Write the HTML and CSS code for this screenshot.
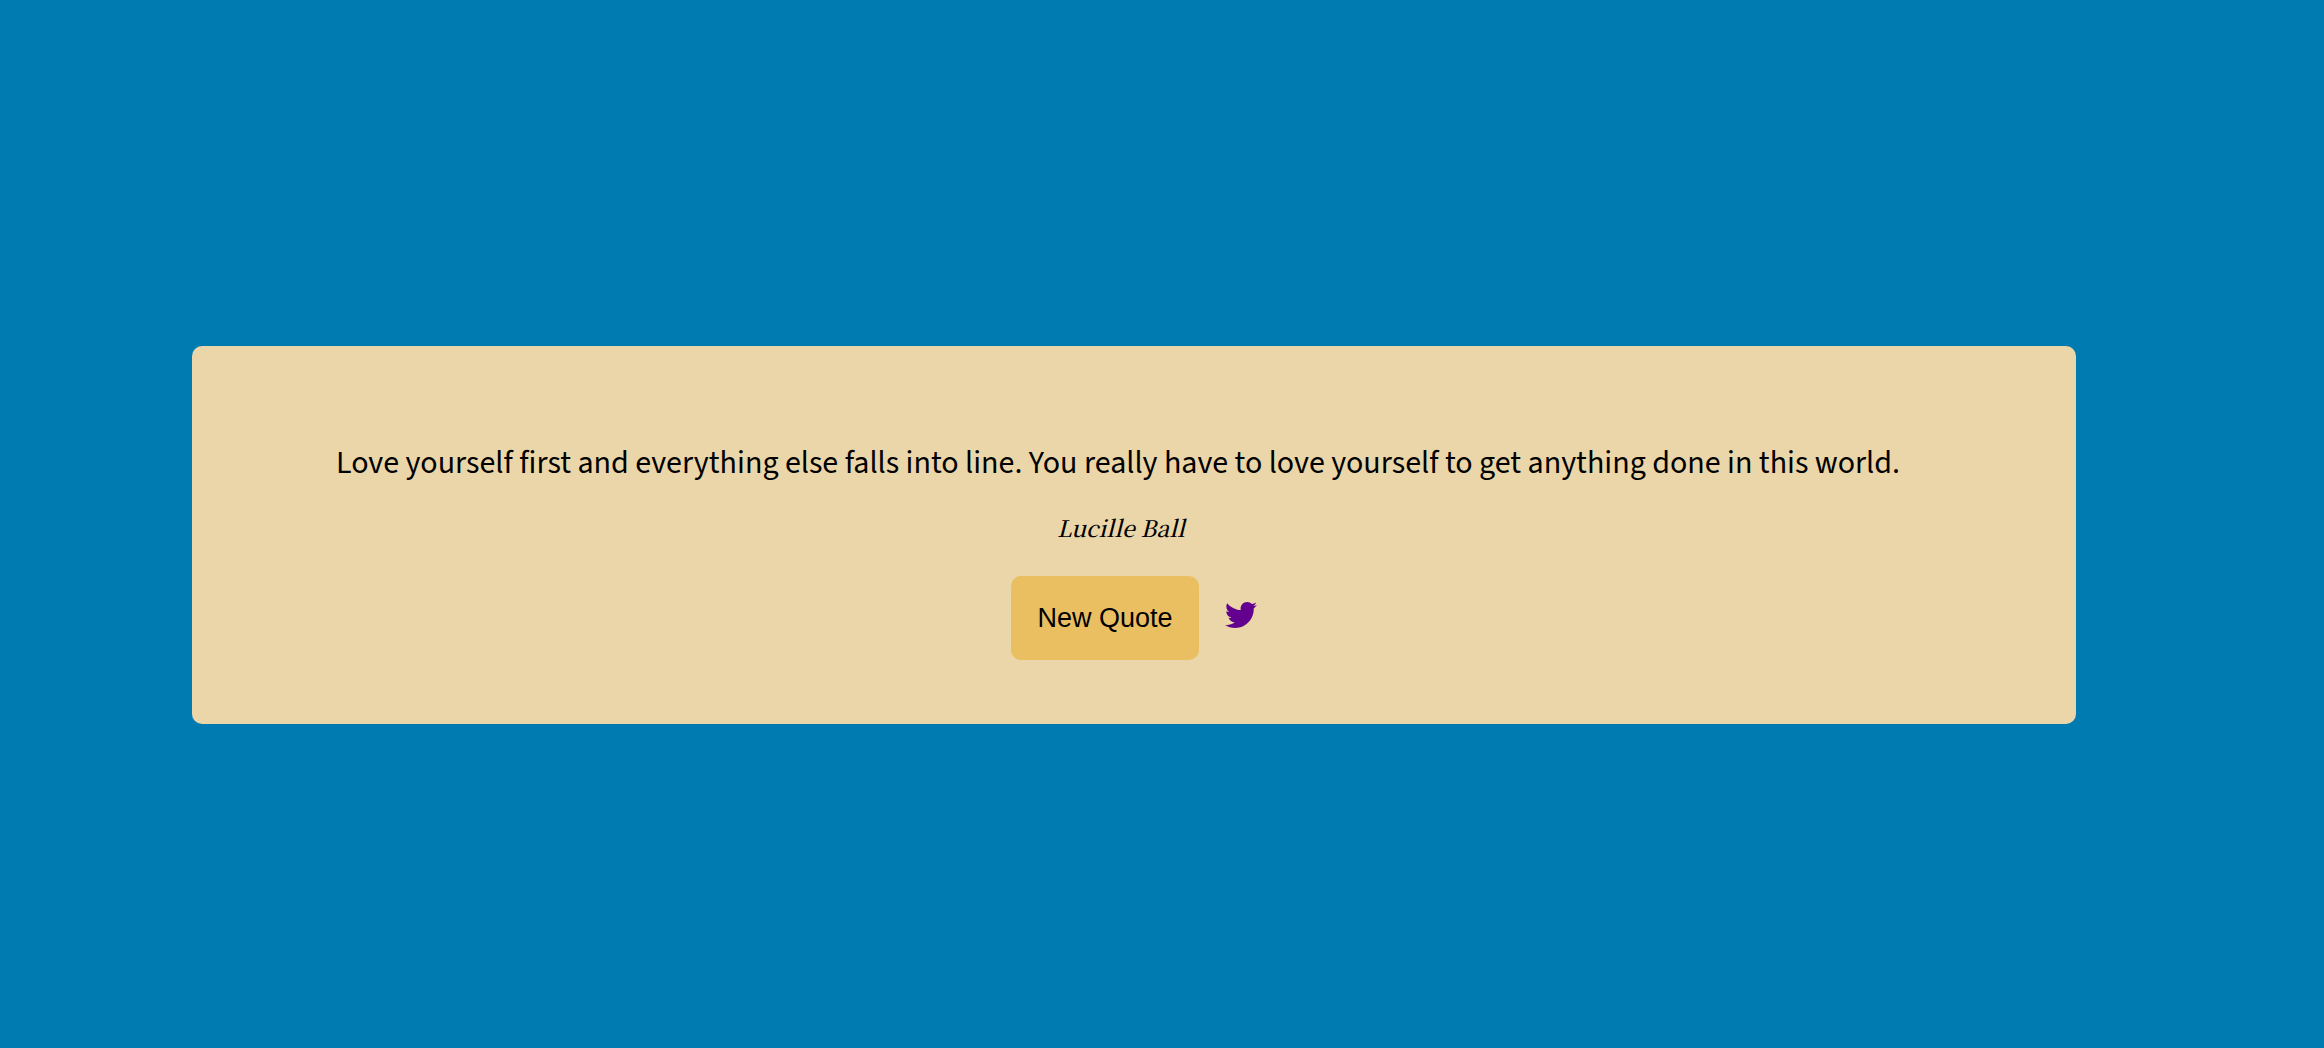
FILE: index.html
```html
<!DOCTYPE html>
<html lang="en">
<head>
<meta charset="utf-8">
<meta name="viewport" content="width=device-width, initial-scale=1">
<title>Random Quote</title>
<link rel="stylesheet" href="styles.css">
</head>
<body>
<main class="quote-box">
  <p class="quote-text">Love yourself first and everything else falls into line. You really have to love yourself to get anything done in this world.</p>
  <p class="quote-author">Lucille Ball</p>
  <div class="actions">
    <button class="new-quote" type="button">New Quote</button>
    <a class="tweet" href="#tweet" aria-label="Tweet this quote">
      <svg class="tweet-icon" viewBox="0 0 512 512" aria-hidden="true"><path d="M459.37 151.716c.325 4.548.325 9.097.325 13.645 0 138.72-105.583 298.558-298.558 298.558-59.452 0-114.68-17.219-161.137-47.106 8.447.974 16.568 1.299 25.34 1.299 49.055 0 94.213-16.568 130.274-44.832-46.132-.975-84.792-31.188-98.112-72.772 6.498.974 12.995 1.624 19.818 1.624 9.421 0 18.843-1.3 27.614-3.573-48.081-9.747-84.143-51.98-84.143-102.985v-1.299c13.969 7.797 30.214 12.67 47.431 13.319-28.264-18.843-46.781-51.005-46.781-87.391 0-19.492 5.197-37.36 14.294-52.954 51.655 63.675 129.3 105.258 216.365 109.807-1.624-7.797-2.599-15.918-2.599-24.04 0-57.828 46.782-104.934 104.934-104.934 30.213 0 57.502 12.67 76.67 33.137 23.715-4.548 46.456-13.32 66.599-25.34-7.798 24.366-24.366 44.833-46.132 57.827 21.117-2.273 41.584-8.122 60.426-16.243-14.292 20.791-32.161 39.308-52.628 54.253z"/></svg>
    </a>
  </div>
</main>
</body>
</html>
```
FILE: styles.css
```css
* {
  box-sizing: border-box;
}

body {
  margin: 0;
  min-height: 100vh;
  padding: 22px 248px 0 192px;
  display: flex;
  align-items: center;
  background: #007bb2;
  color: #000;
}

.quote-box {
  width: 100%;
  padding: 93px 64px 64px;
  border-radius: 10px;
  background: #ebd6a9;
  text-align: center;
}

.quote-text {
  margin: 0 0 23px;
  padding-right: 32px;
  font: 32px/48px "Source Sans 3", "Noto Sans CJK JP", sans-serif;
}

.quote-author {
  margin: 0 0 30px;
  padding-right: 26px;
  font: italic 500 23px/36px "Noto Serif CJK JP", "Liberation Serif", serif;
}

.actions {
  display: flex;
  justify-content: center;
  align-items: center;
  gap: 26px;
}

.new-quote {
  padding: 26px;
  border: 0;
  border-radius: 10px;
  background: #eabf62;
  color: #000;
  font: 27px/32px "Liberation Sans", Arial, sans-serif;
  cursor: pointer;
}

.tweet {
  display: flex;
  margin-bottom: 6px;
  color: #63008f;
}

.tweet-icon {
  width: 32px;
  height: 32px;
  fill: currentColor;
}
```
